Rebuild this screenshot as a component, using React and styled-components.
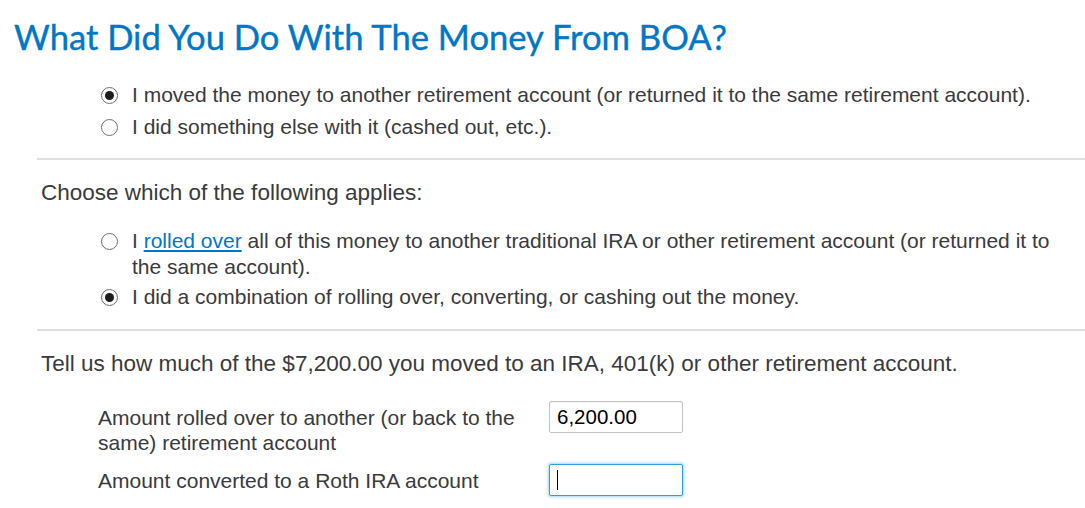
import React from "react";
import styled, { createGlobalStyle } from "styled-components";

const GlobalStyle = createGlobalStyle`
  body {
    margin: 0;
    background: #ffffff;
    font-family: "Liberation Sans", Arial, sans-serif;
    color: #393a3d;
  }
`;

const Page = styled.div`
  width: 1085px;
  padding: 0 0 0 14px;
  box-sizing: border-box;
`;

const Title = styled.h1`
  margin: 0;
  padding-top: 17px;
  font-family: "Lato", "Open Sans", sans-serif;
  font-weight: 400;
  font-size: 34.6px;
  line-height: 40px;
  color: #0077c5;
  -webkit-text-stroke: 0.4px #0077c5;
`;

const Section = styled.div`
  padding: ${(p) => p.$pad || "0"};
  margin-left: 23px;
  border-top: ${(p) => (p.$divider ? "2px solid #e0e0e0" : "none")};
`;

const Prompt = styled.div`
  font-size: 22.5px;
  line-height: 28px;
  padding-left: 4px;
  color: #393a3d;
`;

const RadioList = styled.div`
  display: flex;
  flex-direction: column;
  gap: ${(p) => p.$gap || 6}px;
  padding-left: 64px;
  margin-top: ${(p) => p.$top || 0}px;
  max-width: 964px;
`;

const RadioRow = styled.label`
  display: flex;
  align-items: flex-start;
  gap: 14px;
  font-size: 21px;
  line-height: 26px;
  cursor: pointer;
`;

const Dot = styled.span`
  flex: none;
  box-sizing: border-box;
  width: 17px;
  height: 17px;
  margin-top: 5px;
  border: 1px solid #6f6f6f;
  border-radius: 50%;
  background: #fff;
  position: relative;
  &::after {
    content: "";
    display: ${(p) => (p.$checked ? "block" : "none")};
    position: absolute;
    left: 3px;
    top: 3px;
    width: 9px;
    height: 9px;
    border-radius: 50%;
    background: #1d1d1d;
  }
`;

const Link = styled.a`
  color: #0077c5;
  text-decoration: underline;
`;

const Fields = styled.div`
  display: grid;
  grid-template-columns: 440px 134px;
  column-gap: 11px;
  row-gap: 9px;
  padding-left: 61px;
  margin-top: 23px;
  align-items: start;
`;

const FieldLabel = styled.div`
  font-size: 21px;
  line-height: 25px;
  padding-top: 4px;
`;

const Input = styled.input`
  box-sizing: border-box;
  width: 134px;
  height: 32px;
  padding: 0 7px;
  font-family: "Liberation Sans", Arial, sans-serif;
  font-size: 20.5px;
  color: #000;
  border: 1px solid ${(p) => (p.$focused ? "#2ca0dc" : "#c4c4c4")};
  border-radius: 2px;
  box-shadow: ${(p) =>
    p.$focused ? "0 0 3px 1px rgba(44,160,220,0.45)" : "inset 0 1px 1px rgba(0,0,0,0.06)"};
  outline: none;
  background: #fff;
`;

const Caret = styled.span`
  position: absolute;
  left: 8px;
  top: 6px;
  width: 1px;
  height: 20px;
  background: #000;
`;

const InputWrap = styled.div`
  position: relative;
  width: 134px;
`;

export default function App() {
  return (
    <Page>
      <GlobalStyle />
      <Title>What Did You Do With The Money From BOA?</Title>

      <Section $pad="25px 0 18px">
        <RadioList>
          <RadioRow>
            <Dot $checked />
            <span>
              I moved the money to another retirement account (or returned it to the same retirement
              account).
            </span>
          </RadioRow>
          <RadioRow>
            <Dot />
            <span>I did something else with it (cashed out, etc.).</span>
          </RadioRow>
        </RadioList>
      </Section>

      <Section $divider $pad="19px 0 19px">
        <Prompt>Choose which of the following applies:</Prompt>
        <RadioList $top={21} $gap={4}>
          <RadioRow>
            <Dot />
            <span>
              I <Link href="#">rolled over</Link> all of this money to another traditional IRA or
              other retirement account (or returned it to the same account).
            </span>
          </RadioRow>
          <RadioRow>
            <Dot $checked />
            <span>I did a combination of rolling over, converting, or cashing out the money.</span>
          </RadioRow>
        </RadioList>
      </Section>

      <Section $divider $pad="19px 0 12px">
        <Prompt>Tell us how much of the $7,200.00 you moved to an IRA, 401(k) or other retirement account.</Prompt>
        <Fields>
          <FieldLabel>
            Amount rolled over to another (or back to the same) retirement account
          </FieldLabel>
          <Input defaultValue="6,200.00" />
          <FieldLabel>Amount converted to a Roth IRA account</FieldLabel>
          <InputWrap>
            <Input $focused defaultValue="" />
            <Caret />
          </InputWrap>
        </Fields>
      </Section>
    </Page>
  );
}
